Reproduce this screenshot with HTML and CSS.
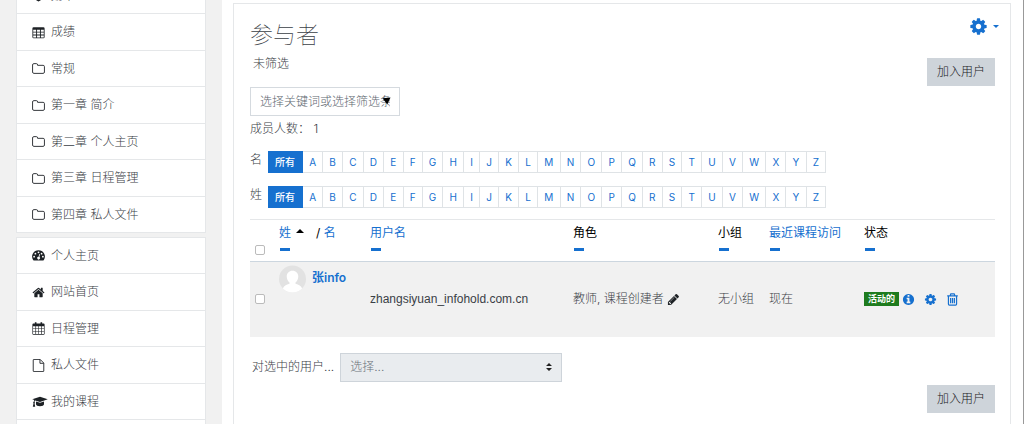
FILE: index.html
```html
<!DOCTYPE html>
<html lang="zh-CN">
<head>
<meta charset="UTF-8" />
<meta name="viewport" content="width=device-width, initial-scale=1" />
<title>参与者</title>
<link rel="stylesheet" href="styles.css">
</head>
<body>

<!-- ICONS -->
<svg class="sprite" aria-hidden="true">
  <symbol id="i-shield" viewBox="0 0 16 16"><path d="M2 1h12v7q0 4.500-6 7.500Q2 12.500 2 8zM8 3v10.200Q12 11 12 8V3z" fill-rule="evenodd"/></symbol>
  <symbol id="i-table" viewBox="0 0 16 16"><path d="M2 1.500h12a1.500 1.500 0 0 1 1.500 1.500v10.500a1.500 1.500 0 0 1-1.500 1.500H2A1.500 1.500 0 0 1 .5 13.500V3A1.500 1.500 0 0 1 2 1.500zM1.500 4.500v2.600h3.600V4.500zm4.700 0v2.600h3.600V4.500zm4.700 0v2.600h3.600V4.500zM1.500 8.100v2.500h3.600V8.100zm4.700 0v2.500h3.600V8.100zm4.700 0v2.500h3.600V8.100zM1.500 11.600V14h3.600v-2.400zm4.700 0V14h3.600v-2.400zm4.700 0V14h3.600v-2.400z" fill-rule="evenodd"/></symbol>
  <symbol id="i-folder" viewBox="0 0 16 16"><path d="M.7 3.700q0-1.700 1.600-1.700h3q1.600 0 1.600 1.600v.5h6.800q1.600 0 1.600 1.600v6.600q0 1.700-1.600 1.700H2.300q-1.600 0-1.600-1.700z" fill="none" stroke="currentColor" stroke-width="1.100"/></symbol>
  <symbol id="i-dashboard" viewBox="0 0 16 16"><path fill-rule="evenodd" d="M8 1.500a7.800 7.800 0 0 0-6.600 12q.2.500.800.500h11.600q.600 0 .800-.500A7.800 7.800 0 0 0 8 1.500zM8 3a1.100 1.100 0 1 1 0 2.200A1.100 1.100 0 0 1 8 3zM4.200 4.600a1.100 1.100 0 1 1 0 2.200 1.100 1.100 0 0 1 0-2.200zm7.600 0a1.100 1.100 0 1 1 0 2.200 1.100 1.100 0 0 1 0-2.200zM2.600 8.300a1.100 1.100 0 1 1 0 2.200 1.100 1.100 0 0 1 0-2.200zm10.800 0a1.100 1.100 0 1 1 0 2.200 1.100 1.100 0 0 1 0-2.200zM9 6.200l.9.300-.8 3.300a1.700 1.700 0 1 1-1-.3z"/></symbol>
  <symbol id="i-home" viewBox="0 0 1792 1792"><path d="M1472 992v480q0 26-19 45t-45 19h-384v-384h-256v384h-384q-26 0-45-19t-19-45v-480q0-1 .5-3t.5-3l575-474 575 474q1 2 1 6zm223-69l-62 74q-8 9-21 11h-3q-13 0-21-7l-692-577-692 577q-12 8-24 7-13-2-21-11l-62-74q-8-10-7-23.5t11-21.5l719-599q32-26 76-26t76 26l244 204v-195q0-14 9-23t23-9h192q14 0 23 9t9 23v408l219 182q10 8 11 21.5t-7 23.5z"/></symbol>
  <symbol id="i-calendar" viewBox="0 0 16 16"><path fill-rule="evenodd" d="M3.500.3h2v1.500h5V.3h2v1.500h1.700q1.300 0 1.300 1.300v11.300q0 1.300-1.300 1.300H1.800q-1.300 0-1.300-1.300V3.100q0-1.300 1.300-1.300h1.700zM1.300 5.200v2.700h2.900V5.200zm3.700 0v2.700h2.700V5.200zm3.400 0v2.700h2.700V5.200zm3.500 0v2.700h2.800V5.200zM1.300 8.700v2.600h2.900V8.700zm3.700 0v2.600h2.700V8.700zm3.400 0v2.600h2.700V8.700zm3.500 0v2.600h2.800V8.700zM1.300 12.100v2.700h2.900v-2.700zm3.700 0v2.700h2.700v-2.700zm3.400 0v2.700h2.700v-2.700zm3.500 0v2.700h2.800v-2.700z"/></symbol>
  <symbol id="i-file" viewBox="0 0 16 16"><path d="M1.500 1.200q0-.7.700-.7H10l4.500 4.500v9.800q0 .7-.7.700H2.200q-.7 0-.7-.7zM9.800.6v4.700h4.600" fill="none" stroke="currentColor" stroke-width="1.100"/></symbol>
  <symbol id="i-course" viewBox="0 0 20 16"><path d="M10 2L.3 5.200 3 6.200c-.7.800-.9 1.700-.9 2.500a1 1 0 0 0-.2 1.700L1 14.500h3l-.8-4.100a1 1 0 0 0-.1-1.700c.1-.9.400-1.600 1-2.100L10 8.500l9.700-3.300zM5 8v3.500C5 12.800 7.200 14 10 14s5-1.200 5-2.500V8l-5 1.700z"/></symbol>
  <symbol id="i-cog" viewBox="0 0 1792 1792"><path d="M1152 896q0-106-75-181t-181-75-181 75-75 181 75 181 181 75 181-75 75-181zm512-109v222q0 12-8 23t-20 13l-185 28q-19 54-39 91 35 50 107 138 10 12 10 25t-9 23q-27 37-99 108t-94 71q-12 0-26-9l-138-108q-44 23-91 38-16 136-29 186-7 28-36 28h-222q-14 0-24.500-8.500t-11.500-21.500l-28-184q-49-16-90-37l-141 107q-10 9-25 9-14 0-25-11-126-114-165-168-7-10-7-23 0-12 8-23 15-21 51-66.500t54-70.500q-27-50-41-99l-183-27q-13-2-21-12.500t-8-23.500v-222q0-12 8-23t19-13l186-28q14-46 39-92-40-57-107-138-10-12-10-24 0-10 9-23 26-36 98.500-107.500t94.500-71.500q13 0 26 10l138 107q44-23 91-38 16-136 29-186 7-28 36-28h222q14 0 24.500 8.500t11.500 21.500l28 184q49 16 90 37l142-107q9-9 24-9 13 0 25 10 129 119 165 170 7 8 7 22 0 12-8 23-15 21-51 66.500t-54 70.500q26 50 41 98l183 28q13 2 21 12.500t8 23.500z"/></symbol>
  <symbol id="i-info" viewBox="0 0 1792 1792"><path d="M1152 1376v-160q0-14-9-23t-23-9h-96v-512q0-14-9-23t-23-9h-320q-14 0-23 9t-9 23v160q0 14 9 23t23 9h96v320h-96q-14 0-23 9t-9 23v160q0 14 9 23t23 9h448q14 0 23-9t9-23zm-128-896v-160q0-14-9-23t-23-9h-192q-14 0-23 9t-9 23v160q0 14 9 23t23 9h192q14 0 23-9t9-23zm640 416q0 209-103 385.500t-279.500 279.500-385.500 103-385.500-103-279.500-279.500-103-385.500 103-385.500 279.500-279.500 385.500-103 385.500 103 279.500 279.500 103 385.500z"/></symbol>
  <symbol id="i-trash" viewBox="0 0 16 16"><path d="M5.500 3V1.800q0-.8.800-.8h3.400q.8 0 .8.800V3M1.500 3.500h13M3 3.500v10q0 1.500 1.200 1.500h7.600q1.200 0 1.200-1.500v-10M5.700 6v6.500M8 6v6.500M10.300 6v6.500" fill="none" stroke="currentColor" stroke-width="1.500"/></symbol>
  <symbol id="i-pencil" viewBox="0 0 1792 1792"><path d="M491 1536l91-91-235-235-91 91v107h128v128h107zm523-928q0-22-22-22-10 0-17 7l-542 542q-7 7-7 17 0 22 22 22 10 0 17-7l542-542q7-7 7-17zm-54-192l416 416-832 832h-416v-416zm683 96q0 53-37 90l-166 166-416-416 166-165q36-38 90-38 53 0 91 38l235 234q37 39 37 91z"/></symbol>
</svg>

<div class="page">

  <!-- DRAWER -->
  <aside class="drawer">
    <nav class="nav-list" aria-label="课程导航">
      <a href="#"><svg class="icon"><use href="#i-shield"/></svg>勋章</a>
      <a href="#"><svg class="icon"><use href="#i-table"/></svg>成绩</a>
      <a href="#"><svg class="icon"><use href="#i-folder"/></svg>常规</a>
      <a href="#"><svg class="icon"><use href="#i-folder"/></svg>第一章 简介</a>
      <a href="#"><svg class="icon"><use href="#i-folder"/></svg>第二章 个人主页</a>
      <a href="#"><svg class="icon"><use href="#i-folder"/></svg>第三章 日程管理</a>
      <a href="#"><svg class="icon"><use href="#i-folder"/></svg>第四章 私人文件</a>
    </nav>
    <nav class="nav-list" aria-label="网站导航">
      <a href="#"><svg class="icon"><use href="#i-dashboard"/></svg>个人主页</a>
      <a href="#"><svg class="icon"><use href="#i-home"/></svg>网站首页</a>
      <a href="#"><svg class="icon"><use href="#i-calendar"/></svg>日程管理</a>
      <a href="#"><svg class="icon"><use href="#i-file"/></svg>私人文件</a>
      <a href="#"><svg class="icon icon-wide"><use href="#i-course"/></svg>我的课程</a>
      <a href="#" aria-label="更多"></a>
    </nav>
  </aside>

  <!-- PARTICIPANTS -->
  <main class="main">
    <section class="card">
      <header class="card-header">
        <h1>参与者</h1>
        <button class="gear" type="button" aria-label="操作菜单">
          <svg class="gear-icon"><use href="#i-cog"/></svg>
          <span class="caret"></span>
        </button>
      </header>

      <div class="toolbar">
        <p class="filter-state">未筛选</p>
        <button class="btn" type="button">加入用户</button>
      </div>

      <div class="filter-box">
        <input type="text" class="filter-input" aria-label="筛选" placeholder="选择关键词或选择筛选条件">
        <svg class="filter-arrow" viewBox="0 0 10 10" aria-hidden="true"><path d="M0 1.500l10-1L6 9.500z"/></svg>
      </div>
      <p class="count">成员人数： 1</p>

      <div class="initials">
        <span class="initials-label">名</span>
        <div class="letters">
          <a href="#" class="active">所有</a><a href="#">A</a><a href="#">B</a><a href="#">C</a><a href="#">D</a><a href="#">E</a><a href="#">F</a><a href="#">G</a><a href="#">H</a><a href="#">I</a><a href="#">J</a><a href="#">K</a><a href="#">L</a><a href="#">M</a><a href="#">N</a><a href="#">O</a><a href="#">P</a><a href="#">Q</a><a href="#">R</a><a href="#">S</a><a href="#">T</a><a href="#">U</a><a href="#">V</a><a href="#">W</a><a href="#">X</a><a href="#">Y</a><a href="#">Z</a>
        </div>
      </div>
      <div class="initials">
        <span class="initials-label">姓</span>
        <div class="letters">
          <a href="#" class="active">所有</a><a href="#">A</a><a href="#">B</a><a href="#">C</a><a href="#">D</a><a href="#">E</a><a href="#">F</a><a href="#">G</a><a href="#">H</a><a href="#">I</a><a href="#">J</a><a href="#">K</a><a href="#">L</a><a href="#">M</a><a href="#">N</a><a href="#">O</a><a href="#">P</a><a href="#">Q</a><a href="#">R</a><a href="#">S</a><a href="#">T</a><a href="#">U</a><a href="#">V</a><a href="#">W</a><a href="#">X</a><a href="#">Y</a><a href="#">Z</a>
        </div>
      </div>

      <table class="users">
        <colgroup>
          <col class="col-check"><col class="col-name"><col class="col-login"><col class="col-role"><col class="col-group"><col class="col-access"><col>
        </colgroup>
        <thead>
          <tr>
            <th class="check"><input type="checkbox" aria-label="全选"></th>
            <th><a href="#">姓</a><span class="sort-up"></span>/ <a href="#">名</a><button class="collapse" type="button" aria-label="隐藏姓名"></button></th>
            <th><a href="#">用户名</a><button class="collapse" type="button" aria-label="隐藏用户名"></button></th>
            <th>角色<button class="collapse" type="button" aria-label="隐藏角色"></button></th>
            <th>小组<button class="collapse" type="button" aria-label="隐藏小组"></button></th>
            <th><a href="#">最近课程访问</a><button class="collapse" type="button" aria-label="隐藏最近课程访问"></button></th>
            <th>状态<button class="collapse" type="button" aria-label="隐藏状态"></button></th>
          </tr>
        </thead>
        <tbody>
          <tr>
            <td class="check"><input type="checkbox" aria-label="选择 张info"></td>
            <td class="user">
              <a href="#">
                <svg class="avatar" viewBox="0 0 28 28"><circle cx="14" cy="14" r="14" fill="#e2e2e2"/><path fill="#fff" d="M14 5.500c3.600 0 6 2.600 6 6 0 2.600-1.300 5-2.900 6.200v1.200c3.500.8 5.900 2.300 6.900 4.900a14 14 0 0 1-20 0c1-2.600 3.400-4.100 6.900-4.900v-1.200C9.300 16.500 8 14.100 8 11.500c0-3.400 2.400-6 6-6z"/></svg>
                张info
              </a>
            </td>
            <td class="login">zhangsiyuan_infohold.com.cn</td>
            <td>教师, 课程创建者 <a href="#" class="edit" aria-label="编辑角色"><svg><use href="#i-pencil"/></svg></a></td>
            <td>无小组</td>
            <td>现在</td>
            <td>
              <div class="status">
                <span class="badge">活动的</span>
                <a href="#" aria-label="详情"><svg><use href="#i-info"/></svg></a>
                <a href="#" aria-label="编辑选课"><svg><use href="#i-cog"/></svg></a>
                <a href="#" aria-label="取消选课"><svg><use href="#i-trash"/></svg></a>
              </div>
            </td>
          </tr>
        </tbody>
      </table>

      <div class="bulk">
        <label for="bulk-action">对选中的用户...</label>
        <div class="select-box">
          <select id="bulk-action" disabled>
            <option>选择...</option>
          </select>
          <svg class="select-arrow" viewBox="0 0 6 8" aria-hidden="true"><path d="M3 0l3 3H0zM3 8L0 5h6z"/></svg>
        </div>
      </div>
      <div class="card-footer">
        <button class="btn" type="button">加入用户</button>
      </div>
    </section>
  </main>

</div>

</body>
</html>
```
FILE: styles.css
```css
/* Reset */
*, *::before, *::after {
  box-sizing: border-box;
}
body, h1, p {
  margin: 0;
}
a {
  color: var(--blue);
  text-decoration: none;
}
button, input, select {
  margin: 0;
  font: inherit;
  color: inherit;
}
button {
  padding: 0;
  border: 0;
  background: none;
  cursor: pointer;
}
svg {
  fill: currentColor;
}

/* Variables */
:root {
  --blue: #1670cf;
  --text: #3a4046;
  --dark: #1d2125;
  --gray-bg: #f1f1f1;
  --line: #e5e7e9;
  --button: #ced4da;
}

body {
  font-family: Inter, "Noto Sans CJK SC", sans-serif;
  font-size: 12px;
  font-weight: 300;
  line-height: 18px;
  color: var(--text);
  background: #fff;
  overflow: hidden;
}
.sprite {
  display: none;
}
.page {
  display: grid;
  grid-template-columns: 222px 1fr;
  height: 100vh;
  border-right: 1px solid #999;
}

/* Drawer */
.drawer {
  display: flex;
  flex-direction: column;
  gap: 4px;
  padding: 0 16px;
  background: var(--gray-bg);
  overflow: hidden;
}
.nav-list {
  flex: none;
  background: #fff;
  border: 1px solid var(--line);
  border-bottom: 0;
}
.nav-list:first-child {
  margin-top: -23px;
}
.nav-list a {
  display: flex;
  align-items: center;
  gap: 6px;
  height: 37px;
  padding: 0 15px;
  border-bottom: 1px solid var(--line);
  color: var(--text);
}
.nav-list a:nth-child(odd) {
  height: 36px;
}
.icon {
  width: 13px;
  height: 13px;
  color: var(--dark);
}
.icon-wide {
  width: 16px;
  margin-right: -3px;
}

/* Card */
.main {
  padding: 3px 12px 0 11px;
  overflow: hidden;
}
.card {
  min-height: 100vh;
  padding: 15px 15px 15px 16px;
  border: 1px solid var(--line);
}
.card-header {
  display: flex;
  justify-content: space-between;
}
h1 {
  font-size: 23px;
  font-weight: 100;
  line-height: 32px;
}
.gear {
  display: flex;
  align-items: center;
  gap: 5px;
  height: 14px;
  color: var(--blue);
}
.gear-icon {
  width: 19px;
  height: 19px;
}
.caret {
  margin-right: -4px;
  border: 3px solid transparent;
  border-top-color: currentColor;
  border-bottom: 0;
}
.toolbar {
  display: flex;
  align-items: flex-end;
  justify-content: space-between;
  height: 35px;
}
.filter-state {
  align-self: flex-start;
  padding: 4px 3px;
}
.btn {
  height: 28px;
  padding: 0 10px;
  background: var(--button);
  color: var(--dark);
}

/* Filter */
.filter-box {
  position: relative;
  width: 150px;
  margin-top: 1px;
}
.filter-input {
  display: block;
  width: 100%;
  height: 29px;
  padding: 0 9px;
  border: 1px solid #d5dadf;
  background: #fff;
}
.filter-input::placeholder {
  color: #60686f;
  opacity: 1;
}
.filter-arrow {
  position: absolute;
  top: 10px;
  right: 9px;
  width: 9px;
  height: 8px;
  color: #000;
}
.count {
  padding: 4px 0;
}

/* Initials bar */
.initials {
  display: flex;
  gap: 6px;
  margin-top: 9px;
  height: 26px;
}
.initials:first-of-type {
  margin-top: 6px;
}
.letters {
  display: flex;
  width: 558px;
  height: 22px;
}
.letters a {
  flex: auto;
  padding: 0 6px;
  border: 1px solid #dfe3e6;
  border-left-width: 0;
  font-size: 10px;
  font-weight: 400;
  line-height: 20px;
  text-align: center;
}
.letters .active {
  flex: none;
  padding: 0 7px;
  background: var(--blue);
  border-color: var(--blue);
  color: #fff;
  font-weight: 500;
}

/* Users table */
.users {
  width: 100%;
  margin-top: 7px;
  border-collapse: collapse;
  table-layout: fixed;
}
.col-check { width: 20px; }
.col-name { width: 91px; }
.col-login { width: 203px; }
.col-role { width: 145px; }
.col-group { width: 51px; }
.col-access { width: 95px; }
.users th {
  height: 42px;
  padding: 4px 0 0 9px;
  border-top: 1px solid var(--line);
  border-bottom: 1px solid #ccd6df;
  text-align: left;
  vertical-align: top;
  font-weight: 400;
  color: #000;
}
.users td {
  height: 75px;
  padding: 0 0 0 9px;
  background: var(--gray-bg);
  white-space: nowrap;
}
.users .check {
  padding-left: 5px;
}
.users th.check {
  padding-bottom: 6px;
  vertical-align: bottom;
}
.users .login {
  font-family: "Liberation Sans", sans-serif;
}
.users input {
  display: block;
  appearance: none;
  width: 10px;
  height: 10px;
  border: 1px solid #bbb;
  border-radius: 2px;
  background: #fff;
}
.collapse {
  display: block;
  width: 10px;
  height: 3px;
  margin: 6px 0 0 1px;
  background: var(--blue);
}
.sort-up {
  display: inline-block;
  margin: 0 12px 4px 5px;
  border: 4px solid transparent;
  border-bottom-color: currentColor;
  border-top: 0;
}
.users .user {
  padding-top: 3px;
  vertical-align: top;
}
.user a {
  display: flex;
  gap: 6px;
  line-height: 26px;
  font-weight: 600;
}
.avatar {
  width: 27px;
  height: 28px;
}
.edit svg {
  width: 13px;
  height: 13px;
  color: var(--dark);
  vertical-align: middle;
}
.status {
  display: flex;
  align-items: center;
}
.status svg {
  display: block;
  width: 13px;
  height: 13px;
}
.status a + a {
  margin-left: 9px;
}
.badge {
  margin-right: 3px;
  padding: 0 4px;
  background: #1e7b1e;
  color: #fff;
  font-size: 9px;
  font-weight: 700;
  line-height: 14px;
}

/* Bulk actions */
.bulk {
  display: flex;
  align-items: center;
  gap: 6px;
  margin-top: 16px;
  padding-left: 2px;
}
.select-box {
  position: relative;
  width: 222px;
}
.select-box select {
  display: block;
  appearance: none;
  width: 100%;
  height: 29px;
  padding: 0 9px;
  border: 1px solid var(--button);
  border-radius: 0;
  background: #e9ecef;
  color: #6b737b;
  opacity: 1;
}
.select-arrow {
  position: absolute;
  top: 10px;
  right: 10px;
  width: 6px;
  height: 8px;
  color: #222;
}
.card-footer {
  display: flex;
  justify-content: flex-end;
  margin-top: 3px;
}
```
